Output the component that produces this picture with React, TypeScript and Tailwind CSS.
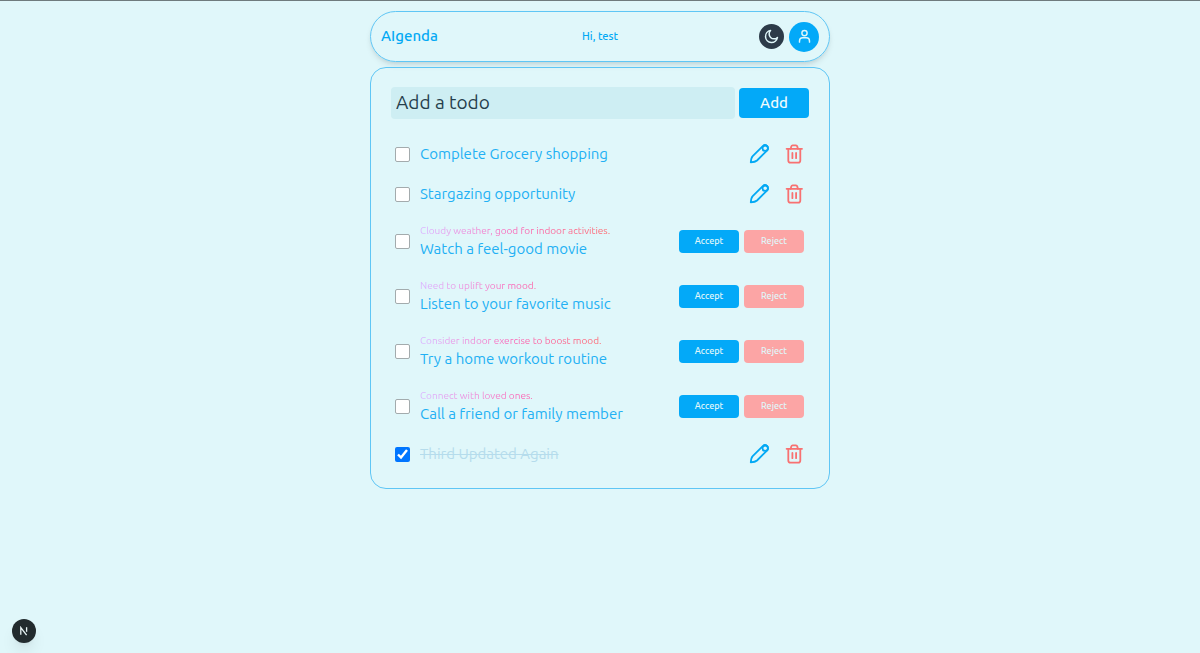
import { useState } from "react";

type Todo = {
  id: number;
  title: string;
  reason?: string;
  done?: boolean;
};

const initialTodos: Todo[] = [
  { id: 1, title: "Complete Grocery shopping" },
  { id: 2, title: "Stargazing opportunity" },
  { id: 3, title: "Watch a feel-good movie", reason: "Cloudy weather, good for indoor activities." },
  { id: 4, title: "Listen to your favorite music", reason: "Need to uplift your mood." },
  { id: 5, title: "Try a home workout routine", reason: "Consider indoor exercise to boost mood." },
  { id: 6, title: "Call a friend or family member", reason: "Connect with loved ones." },
  { id: 7, title: "Third Updated Again", done: true },
];

export default function App() {
  const [todos, setTodos] = useState(initialTodos);
  const [text, setText] = useState("");

  const addTodo = (e: React.FormEvent) => {
    e.preventDefault();
    if (!text.trim()) return;
    setTodos([{ id: Date.now(), title: text }, ...todos]);
    setText("");
  };

  const toggle = (id: number) =>
    setTodos(todos.map((t) => (t.id === id ? { ...t, done: !t.done } : t)));

  const remove = (id: number) => setTodos(todos.filter((t) => t.id !== id));

  const accept = (id: number) =>
    setTodos(todos.map((t) => (t.id === id ? { ...t, reason: undefined } : t)));

  return (
    <div className="min-h-screen border-t border-[#6f7b7d] bg-[#e0f7fa] pt-[10px] font-['Ubuntu','Noto_Sans',sans-serif] text-[#03a9f4]">
      <div className="mx-auto flex w-full max-w-[460px] flex-col gap-[5px]">
        <Header />

        <main className="rounded-2xl border border-[#5fc6f5] px-5 pt-[19px] pb-[14px]">
          <form onSubmit={addTodo} className="mb-[15px] flex items-center gap-1">
            <input
              type="text"
              aria-label="Add a todo"
              placeholder="Add a todo"
              value={text}
              onChange={(e) => setText(e.target.value)}
              className="h-8 min-w-0 flex-1 rounded bg-[#ceeef3] px-[5px] pb-[2px] text-[19px] text-[#263f4d] outline-none placeholder:text-[#263f4d]"
            />
            <button className="h-[30px] w-[70px] rounded bg-[#03a9f8] text-[15px] font-medium text-[#effbfd]">
              Add
            </button>
          </form>

          <ul>
            {todos.map((todo) => (
              <TodoItem
                key={todo.id}
                todo={todo}
                onToggle={() => toggle(todo.id)}
                onRemove={() => remove(todo.id)}
                onAccept={() => accept(todo.id)}
              />
            ))}
          </ul>
        </main>
      </div>

      <button
        aria-label="Open dev tools"
        className="fixed bottom-[10px] left-3 flex size-6 items-center justify-center rounded-full bg-[#222b2e] shadow-lg"
      >
        <svg width="10" height="10" viewBox="0 0 10 10" fill="none" stroke="#e8f4f5" strokeWidth="1.3">
          <path d="M1.8 8.8V1.6L7.6 9.2" />
          <path d="M7.6 1.2V5.8" />
        </svg>
      </button>
    </div>
  );
}

function Header() {
  return (
    <header className="grid h-[51px] grid-cols-3 items-center rounded-full border border-[#5fc6f5] px-[10px] shadow-md">
      <h1 className="text-[15px] font-medium">AIgenda</h1>
      <p className="text-center text-[11px] font-medium">Hi, test</p>
      <div className="flex items-center justify-end gap-[5px]">
        <button
          aria-label="Dark mode"
          className="flex size-[25px] items-center justify-center rounded-full bg-[#2d3b49] text-[#e0f7fa]"
        >
          <svg width="15" height="15" viewBox="0 0 24 24" fill="none" stroke="currentColor" strokeWidth="2.4" strokeLinejoin="round">
            <path d="M10.5 2.5A9.6 9.6 0 1 0 21.5 13.5A6.5 6.5 0 1 1 10.5 2.5Z" />
          </svg>
        </button>
        <button
          aria-label="Account"
          className="flex size-[30px] items-center justify-center rounded-full bg-[#03a9f8] text-[#e0f7fa]"
        >
          <svg width="15" height="15" viewBox="0 0 24 24" fill="none" stroke="currentColor" strokeWidth="2.3" strokeLinecap="round">
            <circle cx="12" cy="6.5" r="4.2" />
            <path d="M4 21v-2a5 5 0 0 1 5-5h6a5 5 0 0 1 5 5v2" />
          </svg>
        </button>
      </div>
    </header>
  );
}

type ItemProps = {
  todo: Todo;
  onToggle: () => void;
  onRemove: () => void;
  onAccept: () => void;
};

function TodoItem({ todo, onToggle, onRemove, onAccept }: ItemProps) {
  const inputId = `todo-${todo.id}`;

  return (
    <li className={`flex items-center pr-[5px] pl-1 ${todo.reason ? "h-[55px]" : "h-10"}`}>
      <input
        id={inputId}
        type="checkbox"
        checked={!!todo.done}
        onChange={onToggle}
        className="mr-[10px] size-[15px] shrink-0 appearance-none rounded-xs border border-[#a3abad] bg-white checked:appearance-auto"
      />
      <label htmlFor={inputId} className={`flex flex-col ${todo.reason ? "pb-[2px]" : ""}`}>
        {todo.reason && (
          <span className="bg-linear-to-r from-purple-300 via-pink-400 to-red-400 bg-clip-text text-[10px] leading-4 text-transparent">
            {todo.reason}
          </span>
        )}
        <span className={`text-[15px] leading-5 ${todo.done ? "text-[#b5dcec] line-through" : "text-[#22b0f4]"}`}>
          {todo.title}
        </span>
      </label>

      {todo.reason ? (
        <div className="ml-auto flex gap-[5px]">
          <button onClick={onAccept} className="h-[23px] w-[60px] rounded bg-[#03a9f8] text-[9px] font-medium text-[#e0f7fa]">
            Accept
          </button>
          <button onClick={onRemove} className="h-[23px] w-[60px] rounded bg-[#fca5a5] text-[9px] font-medium text-[#e0f7fa]">
            Reject
          </button>
        </div>
      ) : (
        <div className="ml-auto flex gap-[15px]">
          <button aria-label={`Edit ${todo.title}`} className="text-[#03a9f4]">
            <PencilIcon />
          </button>
          <button aria-label={`Delete ${todo.title}`} onClick={onRemove} className="text-[#f87171]">
            <TrashIcon />
          </button>
        </div>
      )}
    </li>
  );
}

function PencilIcon() {
  return (
    <svg width="20" height="20" viewBox="0 0 20 20" fill="none" stroke="currentColor" strokeWidth="1.8" strokeLinejoin="round">
      <path d="M13.8 2.1L3.7 12.2C2.7 13.2 2 15.6 1.8 18.4C4.6 18.2 6.9 17.5 8 16.5L18.2 6.4A3 3 0 0 0 13.8 2.1Z" />
      <circle cx="16.2" cy="4.2" r="2.7" />
    </svg>
  );
}

function TrashIcon() {
  return (
    <svg width="20" height="20" viewBox="0 0 20 20" fill="none" stroke="currentColor" strokeWidth="1.8" strokeLinecap="round" strokeLinejoin="round">
      <path d="M2.6 4.8H18" />
      <path d="M6.7 4.8L7.3 2.4Q7.6 1.3 8.7 1.3H11.9Q13 1.3 13.3 2.4L13.9 4.8" />
      <path d="M4.3 4.8V16.4Q4.3 18.6 6.5 18.6H14.1Q16.3 18.6 16.3 16.4V4.8" />
      <path d="M8.4 9V14.2M12.1 9V14.2" />
    </svg>
  );
}
